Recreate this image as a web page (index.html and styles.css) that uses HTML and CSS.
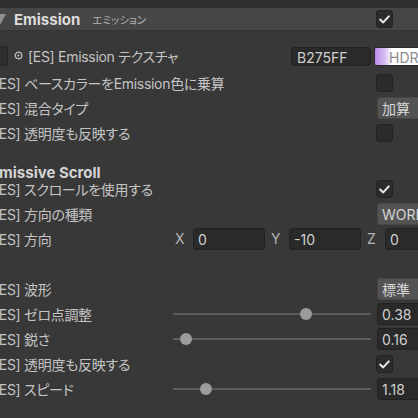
FILE: index.html
```html
<!DOCTYPE html>
<html>
<head>
  <meta charset="utf-8">
  <title>Material Inspector</title>
  <link rel="stylesheet" href="styles.css">
</head>
<body>
  <div class="topStrip"></div>

  <div class="header">
    <svg class="fold" width="6" height="11" viewBox="6 0 6 11"><polygon points="0,0 12,0 6,11" /></svg>
    <span class="headTitle">Emission</span>
    <span class="headSub">エミッション</span>
    <span class="check on headCheck">
      <svg width="11" height="9" viewBox="0 0 11 9"><path d="M1.2 4.6 L4.2 7.4 L9.8 1.4" /></svg>
    </span>
  </div>

  <div class="fields">
    <div class="texRow">
      <span class="slot"></span>
      <svg class="picker" width="9" height="11" viewBox="0 0 9 11">
        <circle cx="4.5" cy="4.5" r="3.3" />
        <circle class="dot" cx="4.5" cy="4.5" r="1.1" />
      </svg>
      <span class="label">[ES] Emission テクスチャ</span>
      <span class="hex">B275FF</span>
      <span class="swatch">HDR</span>
    </div>

    <div class="row">
      <span class="label">[ES] ベースカラーをEmission色に乗算</span>
      <span class="check"></span>
    </div>
    <div class="row">
      <span class="label">[ES] 混合タイプ</span>
      <span class="dropdown">加算</span>
    </div>
    <div class="row">
      <span class="label">[ES] 透明度も反映する</span>
      <span class="check"></span>
    </div>

    <div class="section">Emissive Scroll</div>

    <div class="row">
      <span class="label">[ES] スクロールを使用する</span>
      <span class="check on">
        <svg width="11" height="9" viewBox="0 0 11 9"><path d="M1.2 4.6 L4.2 7.4 L9.8 1.4" /></svg>
      </span>
    </div>
    <div class="row">
      <span class="label">[ES] 方向の種類</span>
      <span class="dropdown">WORLD</span>
    </div>
    <div class="row">
      <span class="label">[ES] 方向</span>
      <div class="vector">
        <div class="axis"><span class="axisName">X</span><span class="field">0</span></div>
        <div class="axis"><span class="axisName">Y</span><span class="field">-10</span></div>
        <div class="axis"><span class="axisName">Z</span><span class="field">0</span></div>
      </div>
    </div>

    <div class="row"></div>

    <div class="row">
      <span class="label">[ES] 波形</span>
      <span class="dropdown">標準</span>
    </div>
    <!-- slider thumbs: value mapped onto the track range -->
    <div class="row">
      <span class="label">[ES] ゼロ点調整</span>
      <div class="slider"><span class="track"></span><span class="rail"><span class="thumb" style="left: 68.5%"></span></span></div>
      <span class="field num">0.38</span>
    </div>
    <div class="row">
      <span class="label">[ES] 鋭さ</span>
      <div class="slider"><span class="track"></span><span class="rail"><span class="thumb" style="left: 4%"></span></span></div>
      <span class="field num">0.16</span>
    </div>
    <div class="row">
      <span class="label">[ES] 透明度も反映する</span>
      <span class="check on">
        <svg width="11" height="9" viewBox="0 0 11 9"><path d="M1.2 4.6 L4.2 7.4 L9.8 1.4" /></svg>
      </span>
    </div>
    <div class="row">
      <span class="label">[ES] スピード</span>
      <div class="slider"><span class="track"></span><span class="rail"><span class="thumb" style="left: 14.75%"></span></span></div>
      <span class="field num">1.18</span>
    </div>
  </div>
</body>
</html>
```

FILE: styles.css
```css
html, body {
  margin: 0;
  width: 418px;
  height: 418px;
  overflow: hidden;
  background-color: #383838;
  font-family: Inter, "Noto Sans CJK JP", sans-serif;
  font-size: 14px;
  font-feature-settings: "palt";
  color: #c4c4c4;
}

.topStrip {
  height: 8px;
  background-color: #303030;
}

/* foldout header */
.header {
  display: flex;
  align-items: center;
  height: 23px;
  background-color: #464646;
  border-bottom: 1px solid #333;
  box-sizing: border-box;
}
.fold {
  fill: #8e8e8e;
  margin-right: 8px;
}
.headTitle {
  font-weight: 700;
  font-size: 15px;
  color: #dcdcdc;
}
.headSub {
  font-size: 10.5px;
  color: #b4b4b4;
  margin-left: 12px;
}
.headCheck {
  margin-left: auto;
  margin-right: 25px;
}

/* property rows */
.fields {
  margin-left: -6px;
  padding-top: 10.5px;
  width: 463px;
}
.row {
  display: grid;
  grid-template-columns: 179px 203px 81px;
  align-items: center;
  height: 25px;
}
.label {
  grid-column: 1;
  white-space: nowrap;
  letter-spacing: -0.3px;
}

.texRow {
  display: flex;
  align-items: center;
  height: 29px;
}
.slot {
  width: 14px;
  height: 20px;
  box-sizing: border-box;
  background-color: #2d2d2d;
  border: 1px solid #252525;
  border-radius: 3px;
}
.picker {
  margin-left: 6px;
  margin-right: 5px;
  fill: none;
  stroke: #bdbdbd;
  stroke-width: 1.3;
}
.picker .dot {
  fill: #bdbdbd;
  stroke: none;
}
.hex {
  margin-left: auto;
  width: 80px;
  height: 19px;
  line-height: 19px;
  box-sizing: border-box;
  padding-left: 5px;
  background-color: #2a2a2a;
  border: 1px solid #222;
  border-radius: 3px;
  color: #d0d0d0;
}
.swatch {
  margin-left: 3px;
  width: 83px;
  height: 19px;
  line-height: 19px;
  box-sizing: border-box;
  padding-left: 14px;
  background: linear-gradient(to right, #b98be8 0px, #d8bff2 10px, #ffffff 17px);
  border: 1px solid #2a2a2a;
  border-radius: 2px;
  color: #8c8c8c;
}

.section {
  height: 31px;
  box-sizing: border-box;
  padding-top: 19px;
  line-height: 16px;
  margin-left: -4px;
  font-size: 15px;
  font-weight: 700;
  color: #d4d4d4;
}

/* controls */
.check {
  grid-column: 3;
  display: flex;
  align-items: center;
  justify-content: center;
  width: 17px;
  height: 18px;
  box-sizing: border-box;
  background-color: #2b2b2b;
  border: 1px solid #222;
  border-radius: 3px;
}
.check path {
  fill: none;
  stroke: #e6e6e6;
  stroke-width: 2.1;
  stroke-linecap: round;
  stroke-linejoin: round;
}
.dropdown {
  grid-column: 3;
  margin-left: 1px;
  height: 22px;
  line-height: 21px;
  box-sizing: border-box;
  padding-left: 4px;
  background-color: #535353;
  border: 1px solid #474747;
  border-radius: 3px;
  color: #d6d6d6;
  white-space: nowrap;
  overflow: hidden;
}
.field {
  height: 22px;
  line-height: 21px;
  box-sizing: border-box;
  padding-left: 4px;
  background-color: #2a2a2a;
  border: 1px solid #222;
  border-radius: 3px;
  color: #d0d0d0;
}
.num {
  grid-column: 3;
  margin-left: 1px;
}

.slider {
  grid-column: 2;
  position: relative;
  height: 22px;
  margin-right: 5px;
  display: flex;
  align-items: center;
}
.track {
  flex: 1;
  height: 2px;
  background-color: #5c5c5c;
}
.rail {
  position: absolute;
  left: 0;
  right: 12px;
  top: 5px;
  height: 12px;
}
.thumb {
  position: absolute;
  top: 0;
  width: 12px;
  height: 12px;
  border-radius: 50%;
  background-color: #9c9c9c;
}

.vector {
  grid-column: 2 / 4;
  display: flex;
  gap: 4px;
}
.axis {
  display: flex;
  width: 92px;
}
.axisName {
  width: 20px;
  padding-left: 2px;
  box-sizing: border-box;
  line-height: 22px;
  color: #b4b4b4;
}
.axis .field {
  flex: 1;
}
```
